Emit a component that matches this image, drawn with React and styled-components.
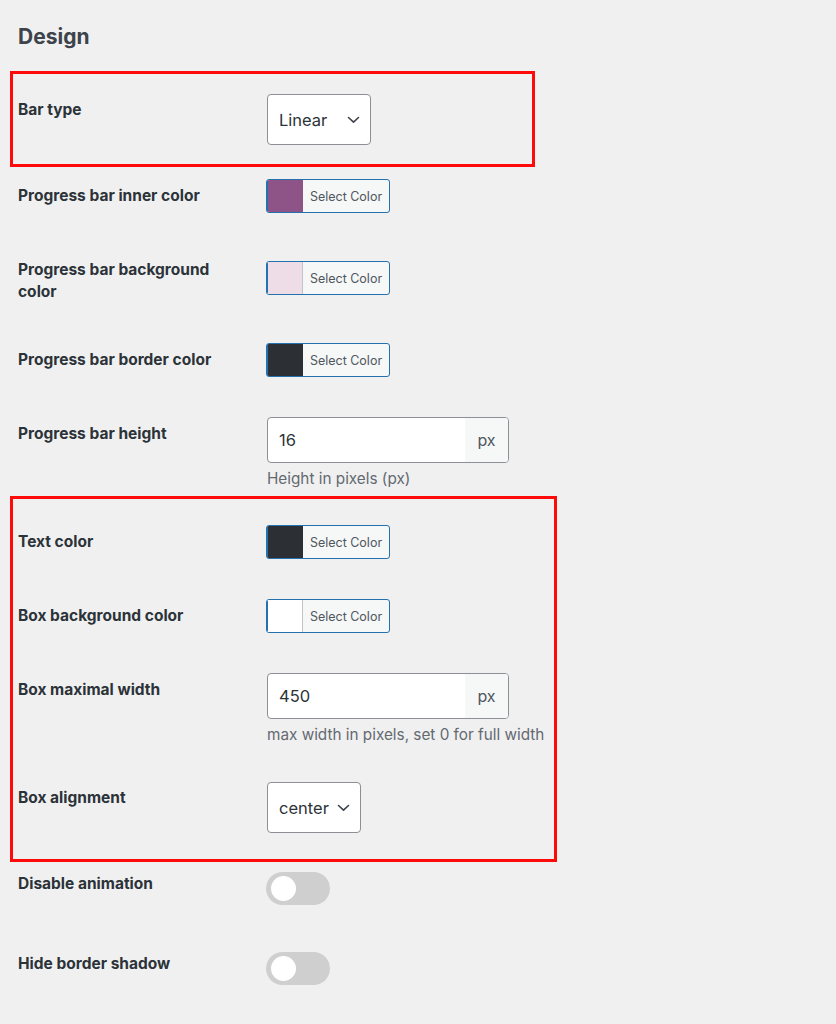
import styled, { createGlobalStyle } from 'styled-components';

const GlobalStyle = createGlobalStyle`
  html, body {
    margin: 0;
    background: #f0f0f1;
  }
  body {
    font-family: Inter, "Noto Sans", sans-serif;
    color: #2c3338;
  }
`;

const rows = [
  { label: 'Bar type', kind: 'select', value: 'Linear', width: 104 },
  { label: 'Progress bar inner color', kind: 'color', color: '#8e5387' },
  { label: 'Progress bar background color', kind: 'color', color: '#eedce6', light: true },
  { label: 'Progress bar border color', kind: 'color', color: '#2c2f33' },
  { label: 'Progress bar height', kind: 'number', value: '16', help: 'Height in pixels (px)' },
  { label: 'Text color', kind: 'color', color: '#2c2f33' },
  { label: 'Box background color', kind: 'color', color: '#ffffff', light: true },
  { label: 'Box maximal width', kind: 'number', value: '450', help: 'max width in pixels, set 0 for full width' },
  { label: 'Box alignment', kind: 'select', value: 'center', width: 94 },
  { label: 'Disable animation', kind: 'toggle' },
  { label: 'Hide border shadow', kind: 'toggle' },
];

const fieldPad = {
  select: '21px 0 14px',
  color: '20px 0',
  number: '20px 0 17px',
  toggle: '25px 0 22px',
};

function Chevron() {
  return (
    <svg width="13" height="8" viewBox="0 0 13 8" fill="none">
      <path d="M1.5 1.5 L6.5 6.2 L11.5 1.5" stroke="#3c434a" strokeWidth="1.6" strokeLinecap="round" strokeLinejoin="round" />
    </svg>
  );
}

function Control({ row }) {
  if (row.kind === 'select') {
    return (
      <Select $width={row.width}>
        <span>{row.value}</span>
        <Chevron />
      </Select>
    );
  }
  if (row.kind === 'color') {
    return (
      <Picker>
        <Swatch $color={row.color} $light={row.light} />
        <PickerText>Select Color</PickerText>
      </Picker>
    );
  }
  if (row.kind === 'number') {
    return (
      <>
        <InputGroup>
          <InputValue>{row.value}</InputValue>
          <Addon>px</Addon>
        </InputGroup>
        <Help>{row.help}</Help>
      </>
    );
  }
  return (
    <Toggle>
      <Knob />
    </Toggle>
  );
}

function Row({ row }) {
  return (
    <StyledRow>
      <Label>{row.label}</Label>
      <Field $pad={fieldPad[row.kind]}>
        <Control row={row} />
      </Field>
    </StyledRow>
  );
}

function App() {
  const first = rows.slice(0, 1);
  const middle = rows.slice(1, 5);
  const boxed = rows.slice(5, 9);
  const last = rows.slice(9);

  return (
    <>
      <GlobalStyle />
      <Page>
        <Title>Design</Title>
        <Highlight $width={525} $top={2} $bottom={8}>
          {first.map((row) => <Row key={row.label} row={row} />)}
        </Highlight>
        {middle.map((row) => <Row key={row.label} row={row} />)}
        <Highlight $width={547} $top={9} $bottom={15}>
          {boxed.map((row) => <Row key={row.label} row={row} />)}
        </Highlight>
        {last.map((row) => <Row key={row.label} row={row} />)}
      </Page>
    </>
  );
}

const Page = styled.div`
  padding: 0 0 30px 18px;
  width: 818px;
  box-sizing: border-box;
`;

const Title = styled.h2`
  margin: 0;
  padding: 23px 0 22px;
  font-size: 21px;
  line-height: 28px;
  font-weight: 700;
  color: #3c434a;
`;

const Highlight = styled.div`
  position: relative;

  &::after {
    content: '';
    position: absolute;
    top: -${(p) => p.$top}px;
    left: -8px;
    width: ${(p) => p.$width}px;
    bottom: -${(p) => p.$bottom}px;
    border: 3px solid #ff0a0a;
    box-sizing: border-box;
    pointer-events: none;
  }
`;

const StyledRow = styled.div`
  display: grid;
  grid-template-columns: 249px 1fr;
`;

const Label = styled.div`
  align-self: start;
  padding: 26px 30px 20px 0;
  font-size: 15.5px;
  line-height: 22px;
  font-weight: 700;
  color: #2c3338;
`;

const Field = styled.div`
  align-self: center;
  padding: ${(p) => p.$pad};
  display: flex;
  flex-direction: column;
  align-items: flex-start;
`;

const Select = styled.div`
  width: ${(p) => p.$width}px;
  height: 51px;
  box-sizing: border-box;
  border: 1px solid #8c8f94;
  border-radius: 4px;
  background: #fff;
  display: flex;
  align-items: center;
  justify-content: space-between;
  padding: 0 10px 0 11px;
  font-size: 16.5px;
  color: #2c3338;
`;

const Picker = styled.div`
  display: flex;
  width: 124px;
  height: 34px;
  box-sizing: border-box;
  border: 1px solid #2271b1;
  border-radius: 3px;
  overflow: hidden;
  background: #f6f7f7;
  margin-left: -1px;
`;

const Swatch = styled.div`
  width: 35px;
  background: ${(p) => p.$color};
  border-right: 1px solid ${(p) => (p.$light ? '#c3c4c7' : p.$color)};
  box-shadow: inset 1px 0 0 #2271b1;
`;

const PickerText = styled.div`
  flex: 1;
  display: flex;
  align-items: center;
  justify-content: center;
  font-size: 12.5px;
  color: #50575e;
`;

const InputGroup = styled.div`
  display: flex;
  width: 242px;
  height: 46px;
  box-sizing: border-box;
  border: 1px solid #8c8f94;
  border-radius: 4px;
  background: #fff;
  overflow: hidden;
`;

const InputValue = styled.div`
  flex: 1;
  display: flex;
  align-items: center;
  padding-left: 11px;
  font-size: 16.5px;
  color: #2c3338;
`;

const Addon = styled.div`
  width: 43px;
  display: flex;
  align-items: center;
  justify-content: center;
  background: #f6f7f7;
  font-size: 16px;
  color: #50575e;
`;

const Help = styled.p`
  margin: 7px 0 0;
  font-size: 15.3px;
  line-height: 18px;
  color: #646970;
`;

const Toggle = styled.div`
  width: 64px;
  height: 33px;
  border-radius: 17px;
  background: #cfcfcf;
  display: flex;
  align-items: center;
  padding-left: 5px;
  box-sizing: border-box;
  margin-left: -1px;
`;

const Knob = styled.div`
  width: 25px;
  height: 25px;
  border-radius: 50%;
  background: #fff;
`;

export default App;
